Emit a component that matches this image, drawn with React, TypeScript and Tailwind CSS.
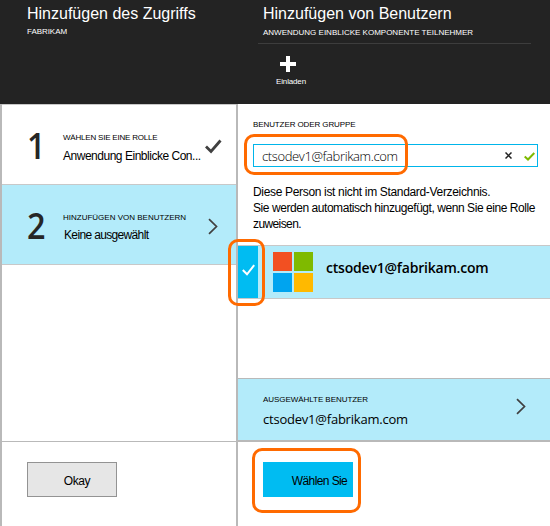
import React from "react";

const arial = "font-['Liberation_Sans',Arial,sans-serif] whitespace-nowrap";
const segoe = "font-['Open_Sans','Noto_Sans',sans-serif] whitespace-nowrap";

function Chevron({ className }: { className: string }) {
  return (
    <svg className={className} width="10" height="17" viewBox="0 0 10 17" fill="none" stroke="#404040" strokeWidth="1.7">
      <path d="M1 1.2 8.5 8.5 1 15.8" />
    </svg>
  );
}

function Highlight({ className }: { className: string }) {
  return <div className={`pointer-events-none absolute rounded-[10px] border-3 border-[#ff6a00] ${className}`} />;
}

function StepNumber({ value }: { value: number }) {
  return (
    <div className="w-[61px] pl-[25px] pt-[17px]">
      <div className={`${segoe} origin-left scale-x-90 text-[36px] font-semibold leading-[48px] text-[#262626]`}>{value}</div>
    </div>
  );
}

function AccessPanel() {
  return (
    <section className="flex w-[238px] shrink-0 flex-col">
      <header className="h-[104px] bg-[#232323] pl-[27px] text-white">
        <h1 className={`${arial} pt-[4px] text-[16px] leading-[20px]`}>Hinzufügen des Zugriffs</h1>
        <p className={`${arial} mt-[3px] text-[8px] leading-[10px] tracking-[-0.05px]`}>FABRIKAM</p>
      </header>
      <div className="flex grow flex-col border-x-2 border-[#b9b9b9] bg-white">
        <div className="flex h-[80px] border-t border-[#c8c8c8]">
          <StepNumber value={1} />
          <div className="w-[142px] pt-[28px]">
            <p className={`${arial} text-[8px] leading-[10px] tracking-[-0.2px]`}>WÄHLEN SIE EINE ROLLE</p>
            <p className={`${arial} mt-[5px] text-[12px] leading-[16px] tracking-[-0.48px]`}>Anwendung Einblicke Con...</p>
          </div>
          <svg className="mt-[34px]" width="17" height="15" viewBox="0 0 17 15" fill="none" stroke="#404040" strokeWidth="2.8">
            <path d="M1 7.5 6 12.5 15.5 1.5" />
          </svg>
        </div>
        <div className="flex h-[81px] border-y border-[#c8c8c8] bg-[#b3ebfa]">
          <StepNumber value={2} />
          <div className="w-[145px] pt-[28px]">
            <p className={`${arial} text-[8px] leading-[10px]`}>HINZUFÜGEN VON BENUTZERN</p>
            <p className={`${arial} mt-[4px] pl-px text-[12px] leading-[16px] tracking-[-0.65px]`}>Keine ausgewählt</p>
          </div>
          <Chevron className="mt-[33px]" />
        </div>
        <div className="h-[176px]" />
        <footer className="grow border-t border-[#b9b9b9] pl-[25px] pt-[20px]">
          <button className={`${arial} h-[35px] w-[90px] border border-[#939393] bg-[#e6e6e6] pl-[10px] pt-[2px] text-[12px] tracking-[-0.4px]`}>Okay</button>
        </footer>
      </div>
    </section>
  );
}

function UsersPanel() {
  return (
    <section className="flex min-w-0 grow flex-col bg-white">
      <header className="h-[104px] bg-[#232323] pl-[20px] text-white">
        <div className="h-[44px] w-[273px] border-b border-[#3d3d3d] pl-[5px]">
          <h1 className={`${arial} pt-[4px] text-[16px] leading-[20px]`}>Hinzufügen von Benutzern</h1>
          <p className={`${arial} mt-[4px] text-[8px] leading-[10px]`}>ANWENDUNG EINBLICKE KOMPONENTE TEILNEHMER</p>
        </div>
        <div className="flex w-[66px] flex-col items-center pt-[12px]">
          <svg className="ml-[-7px]" width="16" height="16" viewBox="0 0 16 16" fill="#fff">
            <path d="M6 0h4v6h6v4h-6v6H6v-6H0V6h6z" />
          </svg>
          <span className={`${arial} mt-[5px] text-[8px] leading-[10px] tracking-[-0.15px]`}>Einladen</span>
        </div>
      </header>
      <div className="h-[141px] pl-[15px] pt-[16px]">
        <p className={`${arial} text-[8px] leading-[10px] tracking-[-0.1px]`}>BENUTZER ODER GRUPPE</p>
        <div className="mt-[14px] flex h-[23px] w-[285px] items-center border border-[#00b5ea]">
          <span className={`${segoe} w-[251px] pl-[8px] text-[13px] font-light leading-[20px] tracking-[-0.38px] text-black`}>ctsodev1@fabrikam.com</span>
          <svg width="7" height="7" viewBox="0 0 7 7" fill="none" stroke="#222" strokeWidth="1.5">
            <path d="m.5.5 6 6m0-6-6 6" />
          </svg>
          <svg className="ml-[12px] mt-[2px]" width="11" height="9" viewBox="0 0 11 9" fill="none" stroke="#7fba00" strokeWidth="2">
            <path d="M.7 4.5 4 7.5 10.3 1" />
          </svg>
        </div>
        <div className={`${arial} mt-[17px] text-[12px] leading-[16px]`}>
          <p className="tracking-[-0.33px]">Diese Person ist nicht im Standard-Verzeichnis.</p>
          <p className="tracking-[-0.44px]">Sie werden automatisch hinzugefügt, wenn Sie eine Rolle</p>
          <p className="tracking-[-0.6px]">zuweisen.</p>
        </div>
      </div>
      <div className="flex h-[54px] border-y border-[#c8c8c8] bg-[#b3ebfa]">
        <div className="flex h-[52px] w-[20px] items-center justify-center bg-[#00bcf2]">
          <svg className="mt-[-5px]" width="13" height="12" viewBox="0 0 13 12" fill="none" stroke="#fff" strokeWidth="2">
            <path d="M.8 6 5 10.3 12.2 1.2" />
          </svg>
        </div>
        <div className="ml-[15px] mt-[6px] grid h-[40px] w-[40px] grid-cols-2 gap-[2px]">
          <i className="bg-[#f25022]" />
          <i className="bg-[#7fba00]" />
          <i className="bg-[#00a4ef]" />
          <i className="bg-[#ffb900]" />
        </div>
        <p className={`${segoe} ml-[13px] mt-[12px] text-[14px] font-semibold leading-[20px] tracking-[-0.2px]`}>ctsodev1@fabrikam.com</p>
      </div>
      <div className="h-[79px]" />
      <div className="flex h-[64px] border-b-2 border-t border-[#b9b9b9] bg-[#b3ebfa] pl-[25px]">
        <div className="w-[253px] pt-[16px]">
          <p className={`${arial} text-[8px] leading-[10px] tracking-[-0.05px]`}>AUSGEWÄHLTE BENUTZER</p>
          <p className={`${segoe} mt-[4px] text-[13px] leading-[20px] tracking-[-0.22px]`}>ctsodev1@fabrikam.com</p>
        </div>
        <Chevron className="mt-[19px]" />
      </div>
      <footer className="pl-[25px] pt-[20px]">
        <button className={`${arial} h-[35px] w-[90px] bg-[#00bcf2] pl-[23px] pt-[2px] text-[12px] tracking-[-0.6px]`}>Wählen Sie</button>
      </footer>
    </section>
  );
}

export default function App() {
  return (
    <main className="relative flex h-[526px] w-[550px] overflow-hidden bg-white text-black">
      <AccessPanel />
      <UsersPanel />
      <Highlight className="left-[244px] top-[134px] h-[41px] w-[164px]" />
      <Highlight className="left-[228px] top-[239px] h-[67px] w-[37px]" />
      <Highlight className="left-[252px] top-[448px] h-[65px] w-[109px]" />
    </main>
  );
}
